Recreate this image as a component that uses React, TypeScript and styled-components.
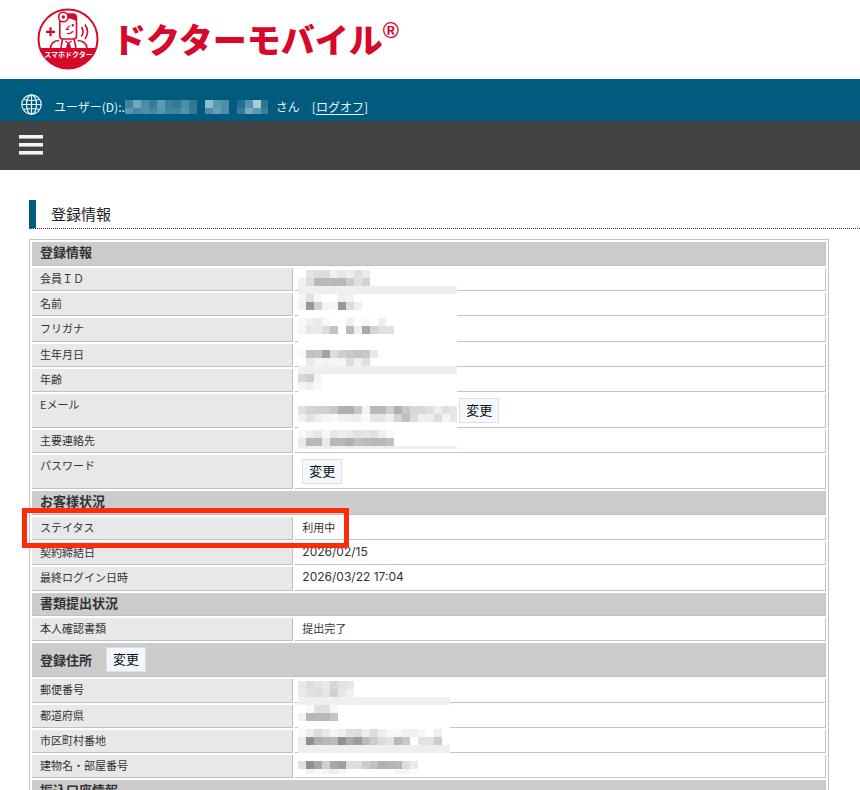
import React from 'react';
import styled, { createGlobalStyle } from 'styled-components';

const GlobalStyle = createGlobalStyle`
  * { box-sizing: border-box; }
  body {
    margin: 0;
    background: #fff;
    color: #333;
    font-family: "Noto Sans CJK JP", "Liberation Sans", sans-serif;
    font-size: 11px;
  }
`;

const Page = styled.div`
  height: 100vh;
  overflow: hidden;
`;

const Masthead = styled.header`
  display: flex;
  align-items: center;
  height: 79px;
  padding: 0 0 2px 37px;
`;

const Emblem = styled.svg`
  flex: none;
  width: 62px;
  height: 62px;
`;

const Wordmark = styled.h1`
  display: flex;
  align-items: flex-start;
  margin: 0 0 0 13px;
  color: #d7092a;
  font-size: 34px;
  font-weight: 900;
  line-height: 40px;
  white-space: nowrap;
`;

const Registered = styled.sup`
  font-family: "Liberation Sans", sans-serif;
  font-size: 22px;
  font-weight: 700;
  line-height: 24px;
`;

const UserBar = styled.div`
  display: flex;
  align-items: center;
  height: 42px;
  padding: 9px 0 0 21px;
  background: #005b7f;
  color: #e6f8fa;
  font-size: 12px;
  line-height: 18px;
  white-space: nowrap;
`;

const Globe = styled.svg`
  flex: none;
  width: 21px;
  height: 21px;
  margin: 0 12px 0 0;
`;

const UserText = styled.div`
  display: flex;
  align-items: center;
  padding-top: 4px;
`;

const NameMask = styled.svg`
  width: 143px;
  height: 14px;
  margin-right: 8px;
`;

const LogOff = styled.span`
  margin-left: 12px;
  a { color: inherit; text-underline-offset: 2px; }
`;

const MenuBar = styled.nav`
  display: flex;
  height: 49px;
  padding: 14px 19px;
  background: #434343;
  border-bottom: 1px solid #1d4d5f;
`;

const MenuButton = styled.button`
  display: flex;
  flex-direction: column;
  gap: 4px;
  width: 24px;
  padding: 0;
  border: 0;
  background: none;
`;

const MenuLine = styled.span`
  height: 4px;
  background: #f4f4f4;
  border-bottom: 1px solid #aaa;
`;

const Content = styled.main`
  padding: 30px 0 0 29px;
`;

const Title = styled.h2`
  height: 29px;
  margin: 0 0 10px;
  padding-left: 15px;
  border-left: 7px solid #005b7f;
  border-bottom: 1px dotted #274651;
  color: #222;
  font-size: 15px;
  font-weight: 400;
  line-height: 28px;
`;

const InfoTable = styled.table`
  width: calc(100% - 31px);
  table-layout: fixed;
  border: 1px solid #c4c4c4;
  border-collapse: separate;
  border-spacing: 2px;
`;

const LabelColumn = styled.col`
  width: 33%;
`;

type Size = 'regular' | 'roomy' | 'action';
const rowHeight: Record<Size, number> = { regular: 23, roomy: 24, action: 34 };

const Row = styled.tr<{ $size: Size }>`
  height: ${p => rowHeight[p.$size]}px;
`;

const SectionCell = styled.th`
  padding: 0 8px;
  background: #ccc;
  border-right: 1px solid #c4c4c4;
  border-bottom: 1px solid #bfbfbf;
  font-size: 13px;
  font-weight: 700;
  line-height: 20px;
  text-align: left;
  vertical-align: top;
`;

const LabelCell = styled.th`
  position: relative;
  padding: 0 8px;
  background: #e8e8e8;
  border-right: 1px solid #c0c0c0;
  border-bottom: 1px solid #c0c0c0;
  font-weight: 400;
  line-height: 20px;
  text-align: left;
  vertical-align: top;
`;

const ValueCell = styled.td`
  position: relative;
  padding: 0 7px;
  border-right: 1px solid #c4c4c4;
  border-bottom: 1px solid #c4c4c4;
  line-height: 20px;
  vertical-align: top;
`;

const DateText = styled.time`
  display: block;
  font-family: Inter, sans-serif;
  font-size: 12px;
`;

const Inline = styled.div`
  display: flex;
  align-items: center;
  padding: 4px 1px 0 0;
`;

const HiddenMail = styled.span`
  width: 157px;
`;

const SectionName = styled.span`
  margin-right: 14px;
`;

const ChangeButton = styled.button`
  height: 25px;
  padding: 0 6px 2px;
  border: 1px solid #d9e0e8;
  background: #f3f8ff;
  color: #111;
  font: 400 13px/20px "Noto Sans CJK JP", sans-serif;
`;

const Highlight = styled.span`
  position: absolute;
  z-index: 2;
  top: -9px;
  left: -10px;
  width: calc(100% + 67px);
  height: 40px;
  border: 5px solid #fb2c08;
  pointer-events: none;
`;

const MosaicLayer = styled.svg`
  position: absolute;
  z-index: 1;
  top: 2px;
  left: 3px;
`;

/* Each row lists two-digit grey levels for 8px blocks; ".." leaves a block white, "=" fills the row. */
const profileMosaic = [
  '..e3ddddf0e6eedfeb',
  'f0ddb8bbb8b8cce0d2',
  '=',
  'f5e0f9....eef3',
  'f098d2f5f598dcee',
  '',
  'f8f0eaf8....f0..f8..ee',
  'f5e6eaddc4..bbeeaad5e0e0',
  '',
  '',
  'fac0c4a2ddcfc8c4c8e8',
  '..e9f5f2f5f5ddf0e0',
  '=',
  'd8cef5',
  'f5eef8',
  '',
  '',
  'e0d5d0d0c8b0b0c8f2b8b8d0b0c8d8d8e0eee0e8',
  'f0e3eef5faf2eef0fae6e6eed5c0ddf0eeddf5e6',
  '',
  'f8eee8f8e8eee8e0e6e0eef8',
  'eab8b8eab8b8b0c0bbb8b8c0',
  '=',
];

const addressMosaic = [
  'e8dde2e8d8e2e6',
  'eae2dde6cfe6f0',
  '=',
  '..fae0e0f8',
  'f2b8b8b8c4',
  '',
  'faeedce8f5f0e0dceedceef8f8f0f0f8..ee',
  'ea90b0b8bb90aa9cbbccdde2b8c8..e2e2cc',
  '=',
  '',
  'e290a8cfa8a0ddddccc0b0b4b8ddea',
  '..f2f8f2eef5............f5f5',
];

function Mosaic({ rows, width, height }: { rows: string[]; width: number; height: number }) {
  return (
    <MosaicLayer width={width} height={height} shapeRendering="crispEdges" aria-hidden="true">
      <rect width={width} height={height} fill="#fff" />
      {rows.map((row, y) =>
        row === '='
          ? <rect key={y} y={y * 8} width={width} height="8" fill="#efefef" />
          : (row.match(/../g) ?? []).map((level, x) =>
              level === '..' ? null : (
                <rect key={`${y}-${x}`} x={x * 8} y={y * 8} width="8" height="8" fill={`#${level}${level}${level}`} />
              )))}
    </MosaicLayer>
  );
}

const nameBlocks: [number, string, string][] = [
  [0, '#3f84a0', '#5a98b0'], [8, '#6ea7bc', '#4488a2'], [16, '#4c8ea7', '#4d8fa8'], [24, '#357c99', '#4387a2'],
  [32, '#5c9bb2', '#5796ae'], [40, '#3d829d', '#3f84a0'], [48, '#33799a', '#4086a1'], [56, '#4a8da7', '#5393ac'], [64, '#2f7897', '#347b99'],
  [80, '#91bccb', '#4b8da6'], [88, '#5a98b0', '#64a0b5'], [96, '#4f90a9', '#4b8da6'],
  [112, '#236f90', '#357c99'], [120, '#5292ab', '#77aabd'], [128, '#a8cbd6', '#5c99b0'], [136, '#2b7594', '#3a7f9b'],
];

function DoctorEmblem() {
  return (
    <Emblem viewBox="37 8 62 62" role="img" aria-label="スマホドクター">
      <circle cx="68" cy="39" r="29.5" fill="#fff" stroke="#d7092a" strokeWidth="2" />
      <path d="M39.5 48H96.5A30 30 0 0 1 39.5 48Z" fill="#d7092a" />
      <g fill="none" stroke="#d7092a" strokeWidth="1.6">
        <path d="M50.5 27.3V36.3M46 31.8H55" strokeWidth="2.2" />
        <path d="M59.8 21V36Q59.8 39 62.8 39H73.5Q76.5 39 76.5 36V18Q76.5 14 73 14H67" />
        <path d="M67 14H74Q77 15 76.5 21L70 18.5H67Z" fill="#d7092a" stroke="none" />
        <circle cx="63.3" cy="17" r="4.7" fill="#fff" />
        <circle cx="63.3" cy="17" r="1.7" fill="#d7092a" stroke="none" />
        <path d="M69.5 25.5L66.5 29.5H69M67 33.5Q71.5 34 73 31" strokeWidth="1.2" />
        <circle cx="72.8" cy="25.3" r="1.2" fill="#d7092a" stroke="none" />
        <path d="M81.5 27Q84.3 31.5 81.5 36.5M85 24.5Q90 31.5 85 39" />
        <path d="M50.5 48Q51 41 59 40.5M77.5 40.5Q86 41 87 48M62.5 39L61 48M74 39L76 48" />
        <path d="M65.5 41L68.5 43.5L71.5 41" strokeWidth="1.2" />
        <path d="M67 43.5H70L71 48H66Z" fill="#d7092a" stroke="none" />
      </g>
      <text x="68.5" y="57" fill="#fff" fontSize="7" fontWeight="700" textAnchor="middle">スマホドクター</text>
    </Emblem>
  );
}

type Entry =
  | { kind: 'section'; size: Size; label: string; change?: boolean }
  | { kind: 'item'; size: Size; label: string; value?: React.ReactNode; marked?: boolean };

const change = <ChangeButton type="button">変更</ChangeButton>;

const entries: Entry[] = [
  { kind: 'section', size: 'roomy', label: '登録情報' },
  { kind: 'item', size: 'regular', label: '会員ＩＤ', value: <Mosaic rows={profileMosaic} width={159} height={179} /> },
  { kind: 'item', size: 'regular', label: '名前' },
  { kind: 'item', size: 'roomy', label: 'フリガナ' },
  { kind: 'item', size: 'regular', label: '生年月日' },
  { kind: 'item', size: 'regular', label: '年齢' },
  { kind: 'item', size: 'action', label: 'Eメール', value: <Inline><HiddenMail />{change}</Inline> },
  { kind: 'item', size: 'regular', label: '主要連絡先' },
  { kind: 'item', size: 'action', label: 'パスワード', value: <Inline>{change}</Inline> },
  { kind: 'section', size: 'roomy', label: 'お客様状況' },
  { kind: 'item', size: 'regular', label: 'ステイタス', value: '利用中', marked: true },
  { kind: 'item', size: 'regular', label: '契約締結日', value: <DateText>2026/02/15</DateText> },
  { kind: 'item', size: 'roomy', label: '最終ログイン日時', value: <DateText>2026/03/22 17:04</DateText> },
  { kind: 'section', size: 'regular', label: '書類提出状況' },
  { kind: 'item', size: 'regular', label: '本人確認書類', value: '提出完了' },
  { kind: 'section', size: 'action', label: '登録住所', change: true },
  { kind: 'item', size: 'roomy', label: '郵便番号', value: <Mosaic rows={addressMosaic} width={152} height={93} /> },
  { kind: 'item', size: 'regular', label: '都道府県' },
  { kind: 'item', size: 'regular', label: '市区町村番地' },
  { kind: 'item', size: 'regular', label: '建物名・部屋番号' },
  { kind: 'section', size: 'roomy', label: '振込口座情報' },
];

export default function App() {
  return (
    <Page>
      <GlobalStyle />
      <Masthead>
        <DoctorEmblem />
        <Wordmark>ドクターモバイル<Registered>®</Registered></Wordmark>
      </Masthead>
      <UserBar>
        <Globe viewBox="0 0 21 21" fill="none" stroke="#e6f8fa" strokeWidth="1.2" aria-hidden="true">
          <circle cx="10.5" cy="10.5" r="9.7" />
          <ellipse cx="10.5" cy="10.5" rx="5" ry="9.7" />
          <path d="M10.5 1V20M1 10.5H20M2.5 5.5Q10.5 7.5 18.5 5.5M2.5 15.5Q10.5 13.5 18.5 15.5" />
        </Globe>
        <UserText>
          <span>ユーザー(D):.</span>
          <NameMask viewBox="0 0 143 14" shapeRendering="crispEdges" aria-hidden="true">
            {nameBlocks.map(([x, top, bottom]) => (
              <g key={x}>
                <rect x={x} width="8" height="8" fill={top} />
                <rect x={x} y="8" width="8" height="6" fill={bottom} />
              </g>
            ))}
          </NameMask>
          <span>さん</span>
          <LogOff>[<a href="#logoff">ログオフ</a>]</LogOff>
        </UserText>
      </UserBar>
      <MenuBar>
        <MenuButton type="button" aria-label="メニュー">
          <MenuLine /><MenuLine /><MenuLine />
        </MenuButton>
      </MenuBar>
      <Content>
        <Title>登録情報</Title>
        <InfoTable>
          <colgroup><LabelColumn /><col /></colgroup>
          <tbody>
            {entries.map((entry, i) => (
              <Row key={i} $size={entry.size}>
                {entry.kind === 'section' ? (
                  <SectionCell colSpan={2} scope="colgroup">
                    {entry.change
                      ? <Inline><SectionName>{entry.label}</SectionName>{change}</Inline>
                      : entry.label}
                  </SectionCell>
                ) : (
                  <>
                    <LabelCell scope="row">{entry.label}{entry.marked && <Highlight />}</LabelCell>
                    <ValueCell>{entry.value}</ValueCell>
                  </>
                )}
              </Row>
            ))}
          </tbody>
        </InfoTable>
      </Content>
    </Page>
  );
}
